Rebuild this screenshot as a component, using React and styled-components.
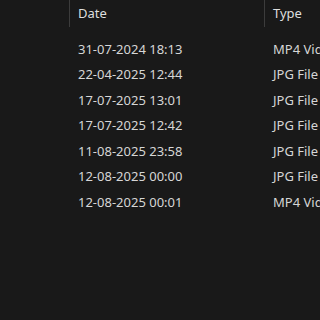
import React from "react";
import styled, { createGlobalStyle } from "styled-components";

const rows = [
  ["31-07-2024 18:13", "MP4 Video File"],
  ["22-04-2025 12:44", "JPG File"],
  ["17-07-2025 13:01", "JPG File"],
  ["17-07-2025 12:42", "JPG File"],
  ["11-08-2025 23:58", "JPG File"],
  ["12-08-2025 00:00", "JPG File"],
  ["12-08-2025 00:01", "MP4 Video File"],
];

const Global = createGlobalStyle`
  html, body { margin: 0; padding: 0; background: #191919; }
  body { font-family: "Noto Sans", "Open Sans", sans-serif; }
`;

export default function App() {
  return (
    <>
      <Global />
      <Wrapper>
        <Header>
          <Spacer />
          <HeadCell w={195}>Date</HeadCell>
          <HeadCell w={100}>Type</HeadCell>
        </Header>
        <Body>
          {rows.map(([date, type], i) => (
            <Row key={i}>
              <Spacer />
              <Cell w={195}>{date}</Cell>
              <Cell w={100}>{type}</Cell>
            </Row>
          ))}
        </Body>
      </Wrapper>
    </>
  );
}

//---------------------------STYLES-------------------------------------------//

const Wrapper = styled.div`
  width: 320px;
  height: 320px;
  overflow: hidden;
  background: #191919;
  color: #d6d6d6;
`;

const Header = styled.div`
  display: flex;
  height: 27px;
`;

const Spacer = styled.div`
  width: 69px;
  flex: none;
`;

const HeadCell = styled.div`
  width: ${(p) => p.w}px;
  flex: none;
  border-left: 1px solid #3c3c3c;
  padding-left: 8px;
  box-sizing: border-box;
  font-size: 13px;
  line-height: 27px;
  color: #dedede;
  white-space: nowrap;
  overflow: hidden;
`;

const Body = styled.div`
  padding-top: 9px;
  display: flex;
  flex-direction: column;
`;

const Row = styled.div`
  display: flex;
  height: 25.5px;
  align-items: center;
`;

const Cell = styled.div`
  width: ${(p) => p.w}px;
  flex: none;
  padding-left: 9px;
  box-sizing: border-box;
  font-size: 13px;
  white-space: nowrap;
  overflow: hidden;
`;
